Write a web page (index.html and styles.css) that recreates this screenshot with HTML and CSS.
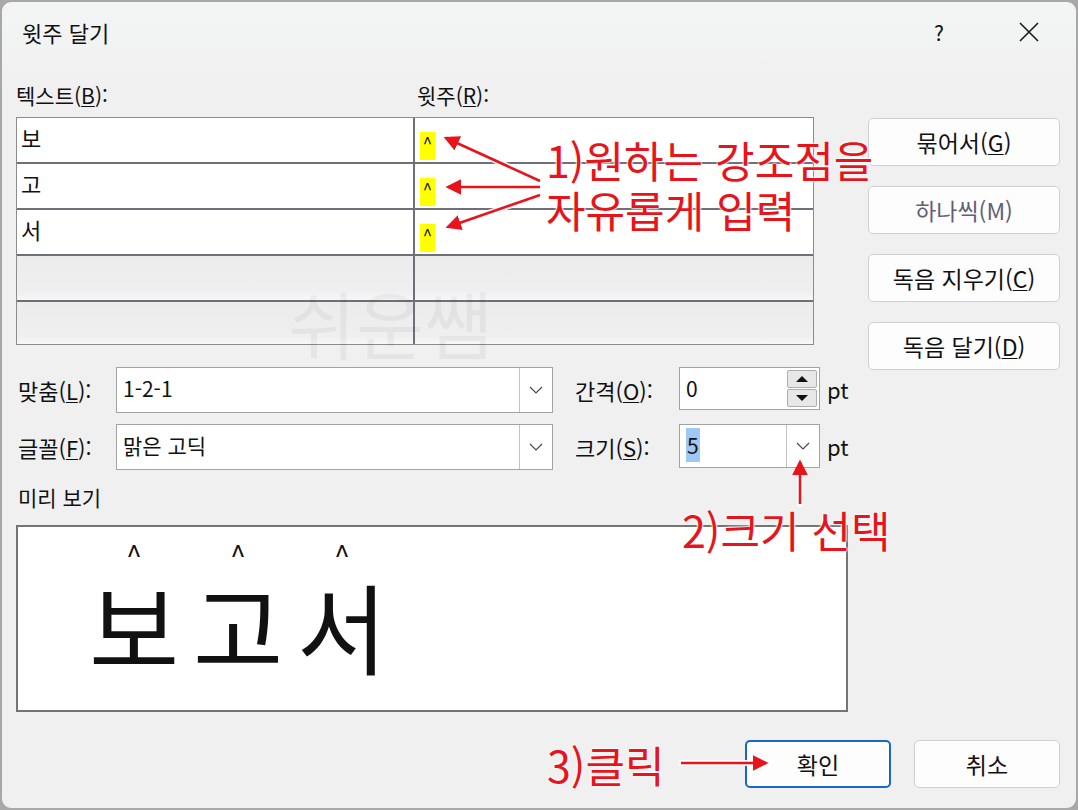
FILE: index.html
```html
<!DOCTYPE html>
<html lang="ko">
<head>
    <meta charset="UTF-8">
    <meta name="viewport" content="width=device-width, initial-scale=1.0">
    <title>윗주 달기</title>
    <link rel="stylesheet" href="styles.css">
</head>
<body>
    <div class="dialog">
        <header class="titlebar">
            <h1 class="title">윗주 달기</h1>
            <div class="title-actions">
                <span class="help">?</span>
                <svg class="close" width="22" height="22" viewBox="0 0 22 22">
                    <path d="M2 2 L20 20 M20 2 L2 20" stroke="#1a1a1a" stroke-width="1.6" fill="none"/>
                </svg>
            </div>
        </header>

        <div class="content">
            <!-- Texte et 윗주 -->
            <section class="top">
                <div class="ruby-area">
                    <div class="col-labels">
                        <span class="col-label">텍스트(<u>B</u>):</span>
                        <span class="col-label">윗주(<u>R</u>):</span>
                    </div>
                    <div class="ruby-grid">
                        <div class="cell">보</div>
                        <div class="cell ruby-cell"><mark>^</mark></div>
                        <div class="cell">고</div>
                        <div class="cell ruby-cell"><mark>^</mark></div>
                        <div class="cell">서</div>
                        <div class="cell ruby-cell"><mark>^</mark></div>
                        <div class="cell empty"></div>
                        <div class="cell ruby-cell empty"></div>
                        <div class="cell empty last"></div>
                        <div class="cell ruby-cell empty last"></div>
                    </div>
                </div>
                <div class="side">
                    <button class="btn">묶어서(<u>G</u>)</button>
                    <button class="btn disabled">하나씩(M)</button>
                    <button class="btn">독음 지우기(<u>C</u>)</button>
                    <button class="btn">독음 달기(<u>D</u>)</button>
                </div>
            </section>

            <!-- Options -->
            <section class="options">
                <div class="opt-row">
                    <span class="opt-label">맞춤(<u>L</u>):</span>
                    <div class="combo wide">
                        <span class="value">1-2-1</span>
                        <span class="drop">
                            <svg width="14" height="8" viewBox="0 0 14 8"><path d="M1 1 L7 7 L13 1" stroke="#444" stroke-width="1.1" fill="none"/></svg>
                        </span>
                    </div>
                    <span class="opt-label small">간격(<u>O</u>):</span>
                    <div class="spin">
                        <span class="value">0</span>
                        <span class="spin-btns">
                            <span class="spin-btn"><i class="tri up"></i></span>
                            <span class="spin-btn"><i class="tri down"></i></span>
                        </span>
                    </div>
                    <span class="unit">pt</span>
                </div>
                <div class="opt-row">
                    <span class="opt-label">글꼴(<u>F</u>):</span>
                    <div class="combo wide">
                        <span class="value">맑은 고딕</span>
                        <span class="drop">
                            <svg width="14" height="8" viewBox="0 0 14 8"><path d="M1 1 L7 7 L13 1" stroke="#444" stroke-width="1.1" fill="none"/></svg>
                        </span>
                    </div>
                    <span class="opt-label small">크기(<u>S</u>):</span>
                    <div class="combo size">
                        <span class="value"><span class="selected">5</span></span>
                        <span class="drop">
                            <svg width="14" height="8" viewBox="0 0 14 8"><path d="M1 1 L7 7 L13 1" stroke="#444" stroke-width="1.1" fill="none"/></svg>
                        </span>
                    </div>
                    <span class="unit">pt</span>
                </div>
            </section>

            <div class="preview-label">미리 보기</div>
            <div class="preview">
                <span class="ruby"><i>^</i><b>보</b></span>
                <span class="ruby"><i>^</i><b>고</b></span>
                <span class="ruby"><i>^</i><b>서</b></span>
            </div>

            <footer class="actions">
                <button class="btn action primary">확인</button>
                <button class="btn action">취소</button>
            </footer>
        </div>

        <!-- Annotations par-dessus -->
        <div class="watermark">쉬운쌤</div>
        <div class="note note-1">1)원하는 강조점을<br>자유롭게 입력</div>
        <div class="note note-2">2)크기 선택</div>
        <div class="note note-3">3)클릭</div>
        <svg class="arrows" width="1074" height="806" viewBox="2 2 1074 806">
            <defs>
                <marker id="head" markerWidth="6" markerHeight="6" refX="5" refY="3" orient="auto" markerUnits="strokeWidth">
                    <path d="M0 0 L6 3 L0 6 Z" fill="#e8141c"/>
                </marker>
            </defs>
            <g stroke="#fff" stroke-width="6" fill="none" stroke-linecap="round" opacity="0.9">
                <path d="M540 181 L444 137"/>
                <path d="M540 187 L446 187"/>
                <path d="M540 195 L446 228"/>
                <path d="M800 504 L800 460"/>
                <path d="M681 763 L768 763"/>
            </g>
            <g stroke="#e8141c" stroke-width="2.6" fill="none" marker-end="url(#head)">
                <path d="M540 181 L446 138"/>
                <path d="M540 187 L448 187"/>
                <path d="M540 195 L448 227"/>
                <path d="M800 504 L800 462"/>
                <path d="M681 763 L766 763"/>
            </g>
        </svg>
    </div>
</body>
</html>
```

FILE: styles.css
```css
html {
    background-color: #a9a9a9;
}

body {
    margin: 0;
    font-family: "Noto Sans CJK KR", "Noto Sans", sans-serif;
    color: #111;
}

.dialog {
    position: relative;
    width: 1078px;
    height: 810px;
    box-sizing: border-box;
    border: 2px solid #a8a8a8;
    border-radius: 11px;
    background: linear-gradient(#f3f5f5, #f0f0f0 90px, #f0f0f0);
    overflow: hidden;
}

/* Barre de titre */
.titlebar {
    display: flex;
    justify-content: space-between;
    align-items: center;
    height: 62px;
    padding: 0 36px 3px 20px;
    box-sizing: border-box;
}

.title {
    margin: 0;
    font-size: 22px;
    font-weight: 400;
}

.title-actions {
    display: flex;
    align-items: center;
    gap: 74px;
}

.help {
    font-size: 21px;
}

.content {
    padding: 0 16px 0 14px;
}

u {
    text-decoration-thickness: 1px;
    text-underline-offset: 2px;
}

/* Zone texte / 윗주 */
.top {
    display: flex;
    align-items: flex-start;
    height: 264px;
    margin-top: 19px;
}

.ruby-area {
    width: 798px;
}

.col-labels {
    display: grid;
    grid-template-columns: 401px 1fr;
    height: 24px;
    margin-bottom: 10px;
}

.col-label {
    font-size: 21px;
    line-height: 24px;
}

.ruby-grid {
    display: grid;
    grid-template-columns: 398px 1fr;
    grid-template-rows: repeat(4, 46px) 42px;
    border: 1px solid #8c8c8c;
}

.cell {
    box-sizing: border-box;
    padding: 4px 4px 0 4px;
    font-size: 22px;
    line-height: 30px;
    background-color: #fff;
    border-bottom: 2px solid #6f6f79;
    border-right: 2px solid #6f6f79;
}

.ruby-cell {
    border-right: none;
    padding: 7px 5px 0 5px;
}

.cell.empty {
    background: linear-gradient(#ececec, #efefef 80%, #f7f7f7);
}

.cell.last {
    border-bottom: none;
}

mark {
    display: inline-block;
    width: 15px;
    height: 28px;
    background-color: #ffff00;
    font-size: 17px;
    line-height: 22px;
    text-align: center;
    color: #111;
}

.side {
    display: flex;
    flex-direction: column;
    flex-shrink: 0;
    gap: 20px;
    margin-left: 54px;
    padding-top: 35px;
    width: 192px;
}

.btn {
    flex-shrink: 0;
    height: 48px;
    border: 1px solid #cfcfcf;
    border-radius: 5px;
    background-color: #fdfdfd;
    font-family: inherit;
    font-size: 23px;
    color: #111;
    padding: 0;
}

.btn.disabled {
    color: #5f6078;
}

/* Options */
.options {
    display: flex;
    flex-direction: column;
    gap: 11px;
    margin-top: 20px;
}

.opt-row {
    display: flex;
    align-items: flex-start;
}

.opt-label {
    width: 100px;
    padding-left: 2px;
    box-sizing: border-box;
    font-size: 22px;
    line-height: 46px;
}

.opt-label.small {
    width: 104px;
    margin-left: 22px;
    padding-left: 0;
}

.combo,
.spin {
    display: flex;
    box-sizing: border-box;
    height: 46px;
    border: 1px solid #a3a3a3;
    background-color: #fff;
}

.combo.wide {
    width: 437px;
}

.combo.size {
    width: 141px;
    height: 44px;
}

.spin {
    width: 141px;
    height: 43px;
}

.value {
    flex: 1;
    padding-left: 6px;
    font-size: 21px;
    line-height: 40px;
}

.selected {
    background-color: #9fc8f5;
    padding: 2px 1px;
}

.drop {
    display: flex;
    align-items: center;
    justify-content: center;
    width: 32px;
    border-left: 1px solid #c2c2c2;
}

.spin-btns {
    display: flex;
    flex-direction: column;
    gap: 1px;
    padding: 2px 2px 2px 0;
}

.spin-btn {
    display: flex;
    align-items: center;
    justify-content: center;
    width: 28px;
    flex: 1;
    background-color: #e7e7e7;
    border: 1px solid #adadad;
    border-radius: 2px;
}

.tri {
    width: 0;
    height: 0;
    border-left: 6px solid transparent;
    border-right: 6px solid transparent;
}

.tri.up {
    border-bottom: 6px solid #111;
}

.tri.down {
    border-top: 6px solid #111;
}

.unit {
    margin-left: 7px;
    font-size: 22px;
    line-height: 44px;
}

/* Aperçu */
.preview-label {
    margin-top: 15px;
    padding-left: 2px;
    font-size: 21px;
    line-height: 24px;
}

.preview {
    display: flex;
    width: 832px;
    height: 187px;
    box-sizing: border-box;
    margin-top: 16px;
    padding: 13px 0 0 64px;
    border: 2px solid #747474;
    background-color: #fff;
}

.ruby {
    display: flex;
    flex-direction: column;
    align-items: center;
    width: 104px;
}

.ruby i {
    font-style: normal;
    font-size: 28px;
    line-height: 28px;
}

.ruby b {
    font-weight: 400;
    font-size: 98px;
    line-height: 98px;
    margin-top: 7px;
}

/* Boutons du bas */
.actions {
    display: flex;
    justify-content: flex-end;
    gap: 23px;
    margin-top: 28px;
}

.btn.action {
    width: 146px;
}

.btn.primary {
    border: 2px solid #1768c4;
}

/* Annotations */
.watermark {
    position: absolute;
    left: 286px;
    top: 266px;
    font-size: 74px;
    color: rgba(0, 0, 0, 0.045);
    pointer-events: none;
}

.note {
    position: absolute;
    color: #e8141c;
    font-size: 43px;
    line-height: 50px;
    text-shadow: 0 0 2px #fff, 0 0 2px #fff, 0 0 3px #fff;
}

.note-1 {
    left: 544px;
    top: 132px;
}

.note-2 {
    left: 680px;
    top: 502px;
}

.note-3 {
    left: 545px;
    top: 737px;
}

.arrows {
    position: absolute;
    left: 0;
    top: 0;
    pointer-events: none;
}
```
